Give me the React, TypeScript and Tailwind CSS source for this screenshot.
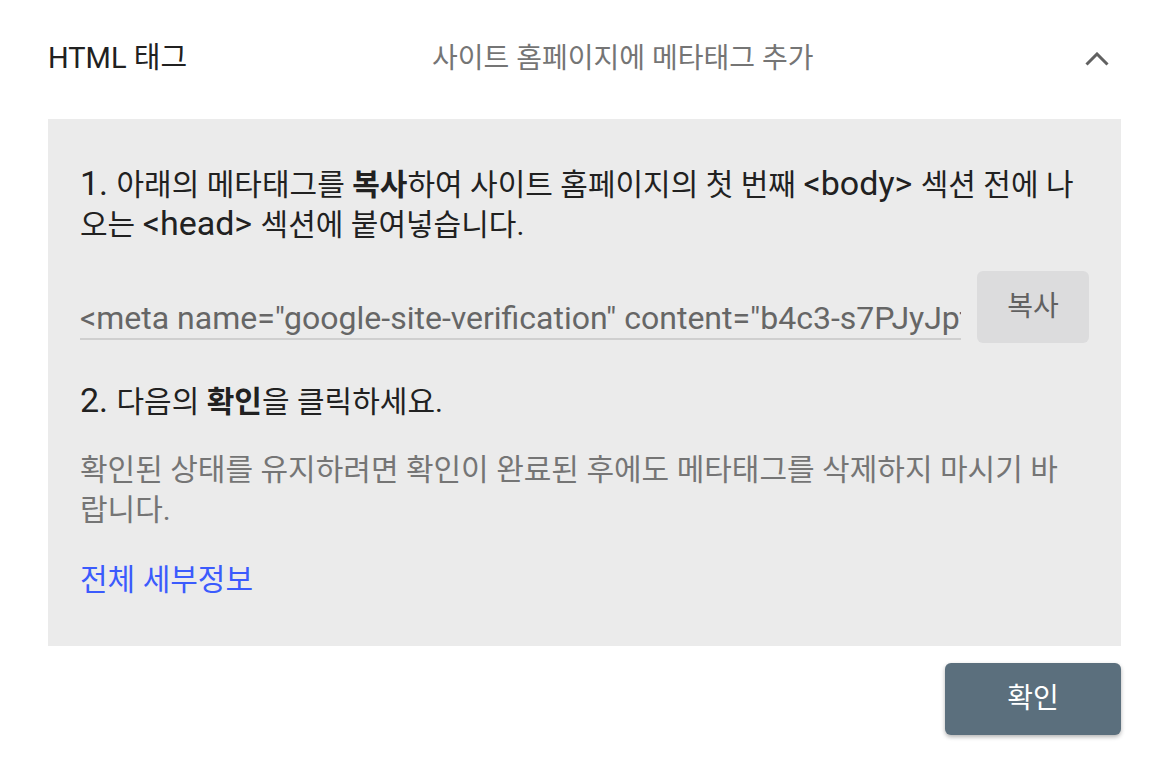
const font = { fontFamily: 'Roboto, "Noto Sans CJK KR", sans-serif' };

function Latin({ children }: { children: React.ReactNode }) {
  return <span className="text-[34px] leading-none">{children}</span>;
}

function ChevronUp() {
  return (
    <svg width="24" height="14" viewBox="0 0 24 14" fill="none" stroke="#616161" strokeWidth="3">
      <path d="M1.5 12.5L12 2l10.5 10.5" />
    </svg>
  );
}

export default function App() {
  return (
    <div className="min-h-[776px] bg-white px-12 text-[30px] text-[#212121]" style={font}>
      <div className="flex h-[119px] items-center pb-[1px]">
        <div className="w-[384px] text-[29px] text-[#212121]">HTML 태그</div>
        <div className="flex-1 text-[28px] text-[#757575]">사이트 홈페이지에 메타태그 추가</div>
        <div className="mr-[12px] flex items-center">
          <ChevronUp />
        </div>
      </div>

      <div className="bg-[#ebebeb] px-8 pb-[46px] pt-[46px] leading-[40px]">
        <p>
          <Latin>1. </Latin>아래의 메타태그를 <b className="font-bold">복사</b>하여 사이트 홈페이지의 첫 번째{" "}
          <Latin>&lt;body&gt; </Latin>섹션 전에 나
          <br />
          오는 <Latin>&lt;head&gt; </Latin>섹션에 붙여넣습니다.
        </p>

        <div className="mt-[26px] flex items-end gap-4">
          <div className="mb-[3px] flex-1 overflow-hidden whitespace-nowrap border-b-2 border-[#cfcfcf] text-[32px] leading-[40px] text-[#666666]">
            &lt;meta name="google-site-verification" content="b4c3-s7PJyJpt8xQm2Zk9LrVwE1hNcYdF0aGuTiOqXo" /&gt;
          </div>
          <button className="h-[72px] w-[112px] rounded-md bg-[#dcdcdd] text-[28px] text-[#616161]" style={font}>
            복사
          </button>
        </div>

        <p className="mt-[39px]">
          <Latin>2. </Latin>다음의 <b className="font-bold">확인</b>을 클릭하세요.
        </p>

        <p className="mt-[28px] text-[#757575]">
          확인된 상태를 유지하려면 확인이 완료된 후에도 메타태그를 삭제하지 마시기 바
          <br />
          랍니다.
        </p>

        <p className="mt-[30px]">
          <a className="text-[#3b5bfd]">전체 세부정보</a>
        </p>
      </div>

      <div className="mt-[17px] flex justify-end">
        <button
          className="h-[72px] w-[176px] rounded-md bg-[#5b6f7d] text-[28px] text-white shadow-[0_2px_4px_rgba(0,0,0,0.3)]"
          style={font}
        >
          확인
        </button>
      </div>
    </div>
  );
}
